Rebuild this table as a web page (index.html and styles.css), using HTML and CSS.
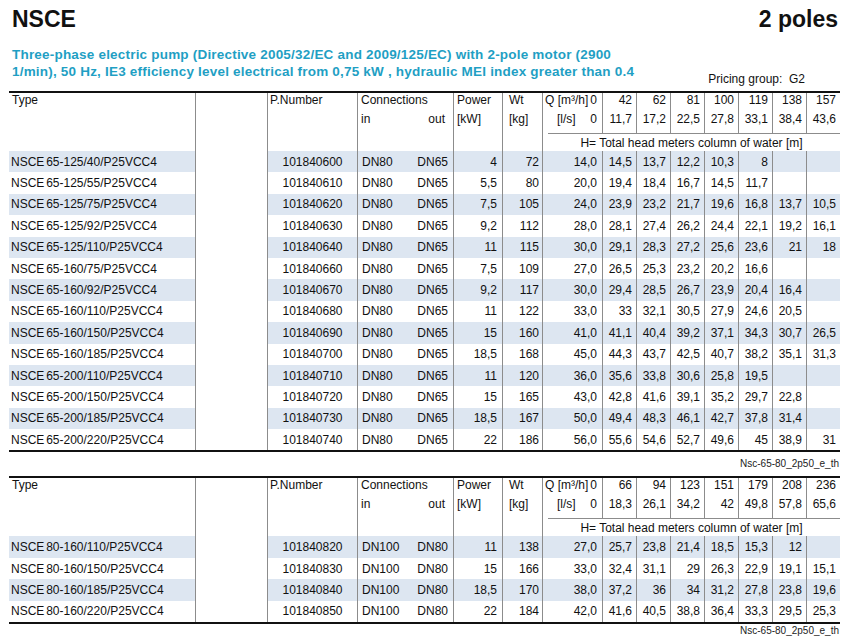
FILE: index.html
```html
<!DOCTYPE html>
<html lang="en">
<head>
<meta charset="utf-8">
<title>NSCE 2 poles</title>
<link rel="stylesheet" href="styles.css">
</head>
<body>
<div class="page">
  <div class="top">
    <span>NSCE</span>
    <span>2 poles</span>
  </div>
  <div class="intro">
    <p class="lead">Three-phase electric pump (Directive 2005/32/EC and 2009/125/EC) with 2-pole motor (2900<br>1/min), 50 Hz, IE3 efficiency level electrical from 0,75 kW , hydraulic MEI index greater than 0.4</p>
    <div class="pricing">Pricing group:&nbsp; G2</div>
  </div>

  <table class="spec spec-first">
    <colgroup>
      <col class="c-type"><col class="c-blank"><col class="c-pn"><col class="c-in"><col class="c-out"><col class="c-pw"><col class="c-wt"><col class="c-q0">
      <col class="c-v"><col class="c-v"><col class="c-v"><col class="c-v"><col class="c-v"><col class="c-v"><col class="c-v">
    </colgroup>
    <thead>
      <tr class="h1">
        <th class="type">Type</th><th class="blank bl"></th><th class="pn bl">P.Number</th><th class="conn bl" colspan="2">Connections</th><th class="pw bl">Power</th><th class="wt bl">Wt</th>
        <th class="q0 bl"><div class="qsplit"><span>Q [m³/h]</span><span>0</span></div></th>
        <th class="v bl">42</th><th class="v bl">62</th><th class="v bl">81</th><th class="v bl">100</th><th class="v bl">119</th><th class="v bl">138</th><th class="v bl">157</th>
      </tr>
      <tr class="h2">
        <th class="type"></th><th class="blank bl"></th><th class="pn bl"></th><th class="in bl">in</th><th class="out">out</th><th class="pw bl">[kW]</th><th class="wt bl">[kg]</th>
        <th class="q0 bl"><div class="qsplit"><span class="ls">[l/s]</span><span>0</span></div></th>
        <th class="v bl">11,7</th><th class="v bl">17,2</th><th class="v bl">22,5</th><th class="v bl">27,8</th><th class="v bl">33,1</th><th class="v bl">38,4</th><th class="v bl">43,6</th>
      </tr>
      <tr class="h3">
        <th class="type"></th><th class="blank bl"></th><th class="pn bl"></th><th class="conn bl" colspan="2"></th><th class="pw bl"></th><th class="wt bl"></th>
        <th class="hcell bl" colspan="8">H= Total head meters column of water [m]</th>
      </tr>
    </thead>
    <tbody>
      <tr><td class="type">NSCE 65-125/40/P25VCC4</td><td class="blank bl"></td><td class="pn bl">101840600</td><td class="in bl">DN80</td><td class="out">DN65</td><td class="pw bl">4</td><td class="wt bl">72</td><td class="q0 bl">14,0</td><td class="v bl">14,5</td><td class="v bl">13,7</td><td class="v bl">12,2</td><td class="v bl">10,3</td><td class="v bl">8</td><td class="v bl"></td><td class="v bl"></td></tr>
      <tr><td class="type">NSCE 65-125/55/P25VCC4</td><td class="blank bl"></td><td class="pn bl">101840610</td><td class="in bl">DN80</td><td class="out">DN65</td><td class="pw bl">5,5</td><td class="wt bl">80</td><td class="q0 bl">20,0</td><td class="v bl">19,4</td><td class="v bl">18,4</td><td class="v bl">16,7</td><td class="v bl">14,5</td><td class="v bl">11,7</td><td class="v bl"></td><td class="v bl"></td></tr>
      <tr><td class="type">NSCE 65-125/75/P25VCC4</td><td class="blank bl"></td><td class="pn bl">101840620</td><td class="in bl">DN80</td><td class="out">DN65</td><td class="pw bl">7,5</td><td class="wt bl">105</td><td class="q0 bl">24,0</td><td class="v bl">23,9</td><td class="v bl">23,2</td><td class="v bl">21,7</td><td class="v bl">19,6</td><td class="v bl">16,8</td><td class="v bl">13,7</td><td class="v bl">10,5</td></tr>
      <tr><td class="type">NSCE 65-125/92/P25VCC4</td><td class="blank bl"></td><td class="pn bl">101840630</td><td class="in bl">DN80</td><td class="out">DN65</td><td class="pw bl">9,2</td><td class="wt bl">112</td><td class="q0 bl">28,0</td><td class="v bl">28,1</td><td class="v bl">27,4</td><td class="v bl">26,2</td><td class="v bl">24,4</td><td class="v bl">22,1</td><td class="v bl">19,2</td><td class="v bl">16,1</td></tr>
      <tr><td class="type">NSCE 65-125/110/P25VCC4</td><td class="blank bl"></td><td class="pn bl">101840640</td><td class="in bl">DN80</td><td class="out">DN65</td><td class="pw bl">11</td><td class="wt bl">115</td><td class="q0 bl">30,0</td><td class="v bl">29,1</td><td class="v bl">28,3</td><td class="v bl">27,2</td><td class="v bl">25,6</td><td class="v bl">23,6</td><td class="v bl">21</td><td class="v bl">18</td></tr>
      <tr><td class="type">NSCE 65-160/75/P25VCC4</td><td class="blank bl"></td><td class="pn bl">101840660</td><td class="in bl">DN80</td><td class="out">DN65</td><td class="pw bl">7,5</td><td class="wt bl">109</td><td class="q0 bl">27,0</td><td class="v bl">26,5</td><td class="v bl">25,3</td><td class="v bl">23,2</td><td class="v bl">20,2</td><td class="v bl">16,6</td><td class="v bl"></td><td class="v bl"></td></tr>
      <tr><td class="type">NSCE 65-160/92/P25VCC4</td><td class="blank bl"></td><td class="pn bl">101840670</td><td class="in bl">DN80</td><td class="out">DN65</td><td class="pw bl">9,2</td><td class="wt bl">117</td><td class="q0 bl">30,0</td><td class="v bl">29,4</td><td class="v bl">28,5</td><td class="v bl">26,7</td><td class="v bl">23,9</td><td class="v bl">20,4</td><td class="v bl">16,4</td><td class="v bl"></td></tr>
      <tr><td class="type">NSCE 65-160/110/P25VCC4</td><td class="blank bl"></td><td class="pn bl">101840680</td><td class="in bl">DN80</td><td class="out">DN65</td><td class="pw bl">11</td><td class="wt bl">122</td><td class="q0 bl">33,0</td><td class="v bl">33</td><td class="v bl">32,1</td><td class="v bl">30,5</td><td class="v bl">27,9</td><td class="v bl">24,6</td><td class="v bl">20,5</td><td class="v bl"></td></tr>
      <tr><td class="type">NSCE 65-160/150/P25VCC4</td><td class="blank bl"></td><td class="pn bl">101840690</td><td class="in bl">DN80</td><td class="out">DN65</td><td class="pw bl">15</td><td class="wt bl">160</td><td class="q0 bl">41,0</td><td class="v bl">41,1</td><td class="v bl">40,4</td><td class="v bl">39,2</td><td class="v bl">37,1</td><td class="v bl">34,3</td><td class="v bl">30,7</td><td class="v bl">26,5</td></tr>
      <tr><td class="type">NSCE 65-160/185/P25VCC4</td><td class="blank bl"></td><td class="pn bl">101840700</td><td class="in bl">DN80</td><td class="out">DN65</td><td class="pw bl">18,5</td><td class="wt bl">168</td><td class="q0 bl">45,0</td><td class="v bl">44,3</td><td class="v bl">43,7</td><td class="v bl">42,5</td><td class="v bl">40,7</td><td class="v bl">38,2</td><td class="v bl">35,1</td><td class="v bl">31,3</td></tr>
      <tr><td class="type">NSCE 65-200/110/P25VCC4</td><td class="blank bl"></td><td class="pn bl">101840710</td><td class="in bl">DN80</td><td class="out">DN65</td><td class="pw bl">11</td><td class="wt bl">120</td><td class="q0 bl">36,0</td><td class="v bl">35,6</td><td class="v bl">33,8</td><td class="v bl">30,6</td><td class="v bl">25,8</td><td class="v bl">19,5</td><td class="v bl"></td><td class="v bl"></td></tr>
      <tr><td class="type">NSCE 65-200/150/P25VCC4</td><td class="blank bl"></td><td class="pn bl">101840720</td><td class="in bl">DN80</td><td class="out">DN65</td><td class="pw bl">15</td><td class="wt bl">165</td><td class="q0 bl">43,0</td><td class="v bl">42,8</td><td class="v bl">41,6</td><td class="v bl">39,1</td><td class="v bl">35,2</td><td class="v bl">29,7</td><td class="v bl">22,8</td><td class="v bl"></td></tr>
      <tr><td class="type">NSCE 65-200/185/P25VCC4</td><td class="blank bl"></td><td class="pn bl">101840730</td><td class="in bl">DN80</td><td class="out">DN65</td><td class="pw bl">18,5</td><td class="wt bl">167</td><td class="q0 bl">50,0</td><td class="v bl">49,4</td><td class="v bl">48,3</td><td class="v bl">46,1</td><td class="v bl">42,7</td><td class="v bl">37,8</td><td class="v bl">31,4</td><td class="v bl"></td></tr>
      <tr><td class="type">NSCE 65-200/220/P25VCC4</td><td class="blank bl"></td><td class="pn bl">101840740</td><td class="in bl">DN80</td><td class="out">DN65</td><td class="pw bl">22</td><td class="wt bl">186</td><td class="q0 bl">56,0</td><td class="v bl">55,6</td><td class="v bl">54,6</td><td class="v bl">52,7</td><td class="v bl">49,6</td><td class="v bl">45</td><td class="v bl">38,9</td><td class="v bl">31</td></tr>
    </tbody>
  </table>
  <div class="note">Nsc-65-80_2p50_e_th</div>

  <table class="spec">
    <colgroup>
      <col class="c-type"><col class="c-blank"><col class="c-pn"><col class="c-in"><col class="c-out"><col class="c-pw"><col class="c-wt"><col class="c-q0">
      <col class="c-v"><col class="c-v"><col class="c-v"><col class="c-v"><col class="c-v"><col class="c-v"><col class="c-v">
    </colgroup>
    <thead>
      <tr class="h1">
        <th class="type">Type</th><th class="blank bl"></th><th class="pn bl">P.Number</th><th class="conn bl" colspan="2">Connections</th><th class="pw bl">Power</th><th class="wt bl">Wt</th>
        <th class="q0 bl"><div class="qsplit"><span>Q [m³/h]</span><span>0</span></div></th>
        <th class="v bl">66</th><th class="v bl">94</th><th class="v bl">123</th><th class="v bl">151</th><th class="v bl">179</th><th class="v bl">208</th><th class="v bl">236</th>
      </tr>
      <tr class="h2">
        <th class="type"></th><th class="blank bl"></th><th class="pn bl"></th><th class="in bl">in</th><th class="out">out</th><th class="pw bl">[kW]</th><th class="wt bl">[kg]</th>
        <th class="q0 bl"><div class="qsplit"><span class="ls">[l/s]</span><span>0</span></div></th>
        <th class="v bl">18,3</th><th class="v bl">26,1</th><th class="v bl">34,2</th><th class="v bl">42</th><th class="v bl">49,8</th><th class="v bl">57,8</th><th class="v bl">65,6</th>
      </tr>
      <tr class="h3">
        <th class="type"></th><th class="blank bl"></th><th class="pn bl"></th><th class="conn bl" colspan="2"></th><th class="pw bl"></th><th class="wt bl"></th>
        <th class="hcell bl" colspan="8">H= Total head meters column of water [m]</th>
      </tr>
    </thead>
    <tbody>
      <tr><td class="type">NSCE 80-160/110/P25VCC4</td><td class="blank bl"></td><td class="pn bl">101840820</td><td class="in bl">DN100</td><td class="out">DN80</td><td class="pw bl">11</td><td class="wt bl">138</td><td class="q0 bl">27,0</td><td class="v bl">25,7</td><td class="v bl">23,8</td><td class="v bl">21,4</td><td class="v bl">18,5</td><td class="v bl">15,3</td><td class="v bl">12</td><td class="v bl"></td></tr>
      <tr><td class="type">NSCE 80-160/150/P25VCC4</td><td class="blank bl"></td><td class="pn bl">101840830</td><td class="in bl">DN100</td><td class="out">DN80</td><td class="pw bl">15</td><td class="wt bl">166</td><td class="q0 bl">33,0</td><td class="v bl">32,4</td><td class="v bl">31,1</td><td class="v bl">29</td><td class="v bl">26,3</td><td class="v bl">22,9</td><td class="v bl">19,1</td><td class="v bl">15,1</td></tr>
      <tr><td class="type">NSCE 80-160/185/P25VCC4</td><td class="blank bl"></td><td class="pn bl">101840840</td><td class="in bl">DN100</td><td class="out">DN80</td><td class="pw bl">18,5</td><td class="wt bl">170</td><td class="q0 bl">38,0</td><td class="v bl">37,2</td><td class="v bl">36</td><td class="v bl">34</td><td class="v bl">31,2</td><td class="v bl">27,8</td><td class="v bl">23,8</td><td class="v bl">19,6</td></tr>
      <tr><td class="type">NSCE 80-160/220/P25VCC4</td><td class="blank bl"></td><td class="pn bl">101840850</td><td class="in bl">DN100</td><td class="out">DN80</td><td class="pw bl">22</td><td class="wt bl">184</td><td class="q0 bl">42,0</td><td class="v bl">41,6</td><td class="v bl">40,5</td><td class="v bl">38,8</td><td class="v bl">36,4</td><td class="v bl">33,3</td><td class="v bl">29,5</td><td class="v bl">25,3</td></tr>
    </tbody>
  </table>
  <div class="note note-last">Nsc-65-80_2p50_e_th</div>
</div>
</body>
</html>
```

FILE: styles.css
```css
html, body {
  margin: 0;
  padding: 0;
  background: #ffffff;
}

body {
  font-family: "Liberation Sans", Arial, sans-serif;
  color: #111111;
}

.page {
  width: 831px;
  padding: 6px 0 0 9px;
}

.top {
  display: flex;
  justify-content: space-between;
  height: 26px;
  line-height: 26px;
  font-size: 23px;
  font-weight: bold;
  padding: 0 2px 0 3px;
}

.intro {
  display: flex;
  justify-content: space-between;
  align-items: flex-end;
  margin-top: 15px;
}

.lead {
  margin: 0;
  padding: 0 0 6px 3px;
  font-size: 13.5px;
  line-height: 16.5px;
  letter-spacing: 0.2px;
  font-weight: bold;
  color: #1f9fc4;
  white-space: nowrap;
}

.pricing {
  font-size: 12px;
  line-height: 14px;
  margin-right: 35px;
}

.spec {
  width: 831px;
  table-layout: fixed;
  border-collapse: separate;
  border-spacing: 0;
  border-top: 2px solid #111111;
  border-bottom: 2px solid #111111;
  font-size: 12px;
}

.spec-first {
  margin-top: 5px;
}

.c-type { width: 186px; }
.c-blank { width: 72px; }
.c-pn { width: 90px; }
.c-in { width: 48px; }
.c-out { width: 48px; }
.c-pw { width: 49px; }
.c-wt { width: 40px; }
.c-q0 { width: 60px; }
.c-v { width: 34px; }

.spec th,
.spec td {
  padding: 0;
  font-weight: normal;
  line-height: 14px;
  white-space: nowrap;
  overflow: hidden;
}

.spec .bl {
  border-left: 1px solid #8c8c8c;
}

/* header */
.spec thead th {
  vertical-align: top;
  text-align: left;
}

.spec tr.h1 { height: 17px; }
.spec tr.h2 { height: 23px; }
.spec tr.h3 { height: 18px; }

.spec tr.h2 th { padding-top: 2px; }
.spec tr.h3 th { padding-top: 3px; }

.spec thead th.type { padding-left: 3px; }
.spec thead th.pn { padding-left: 2px; }
.spec thead th.conn,
.spec thead th.in { padding-left: 3px; }
.spec thead th.out { text-align: right; padding-right: 8px; }
.spec thead th.pw { padding-left: 3px; }
.spec thead th.wt { padding-left: 6px; }
.spec thead th.q0 { padding-left: 2px; padding-right: 5px; }
.spec thead th.v { text-align: right; padding-right: 4px; }

.qsplit {
  display: flex;
  justify-content: space-between;
}

.qsplit .ls {
  margin-left: 12px;
}

.spec thead th.hcell {
  text-align: center;
  background: linear-gradient(#8c8c8c, #8c8c8c) no-repeat 5px 0 / calc(100% - 5px) 1px;
}

/* body */
.spec tbody tr { height: 21.4px; }

.spec tbody td {
  vertical-align: middle;
  text-align: right;
  padding-right: 4px;
}

.spec tbody tr:nth-child(odd) td {
  background: #dde6f1;
}

.spec tbody tr:nth-child(odd) td.blank {
  background: #ffffff;
}

.spec tbody td.type {
  text-align: left;
  padding-left: 2px;
  padding-right: 0;
  word-spacing: -1.5px;
}

.spec tbody td.pn {
  text-align: center;
  padding-right: 0;
}

.spec tbody td.in {
  text-align: left;
  padding-left: 4px;
  padding-right: 0;
}

.spec tbody td.out { padding-right: 5px; }
.spec tbody td.pw { padding-right: 5px; }
.spec tbody td.wt { padding-right: 3px; }
.spec tbody td.q0 { padding-right: 5px; }

.note {
  text-align: right;
  font-size: 10px;
  height: 24px;
  line-height: 24px;
  color: #222222;
  padding-right: 1px;
}

.note-last {
  height: 14px;
  line-height: 14px;
}
```
